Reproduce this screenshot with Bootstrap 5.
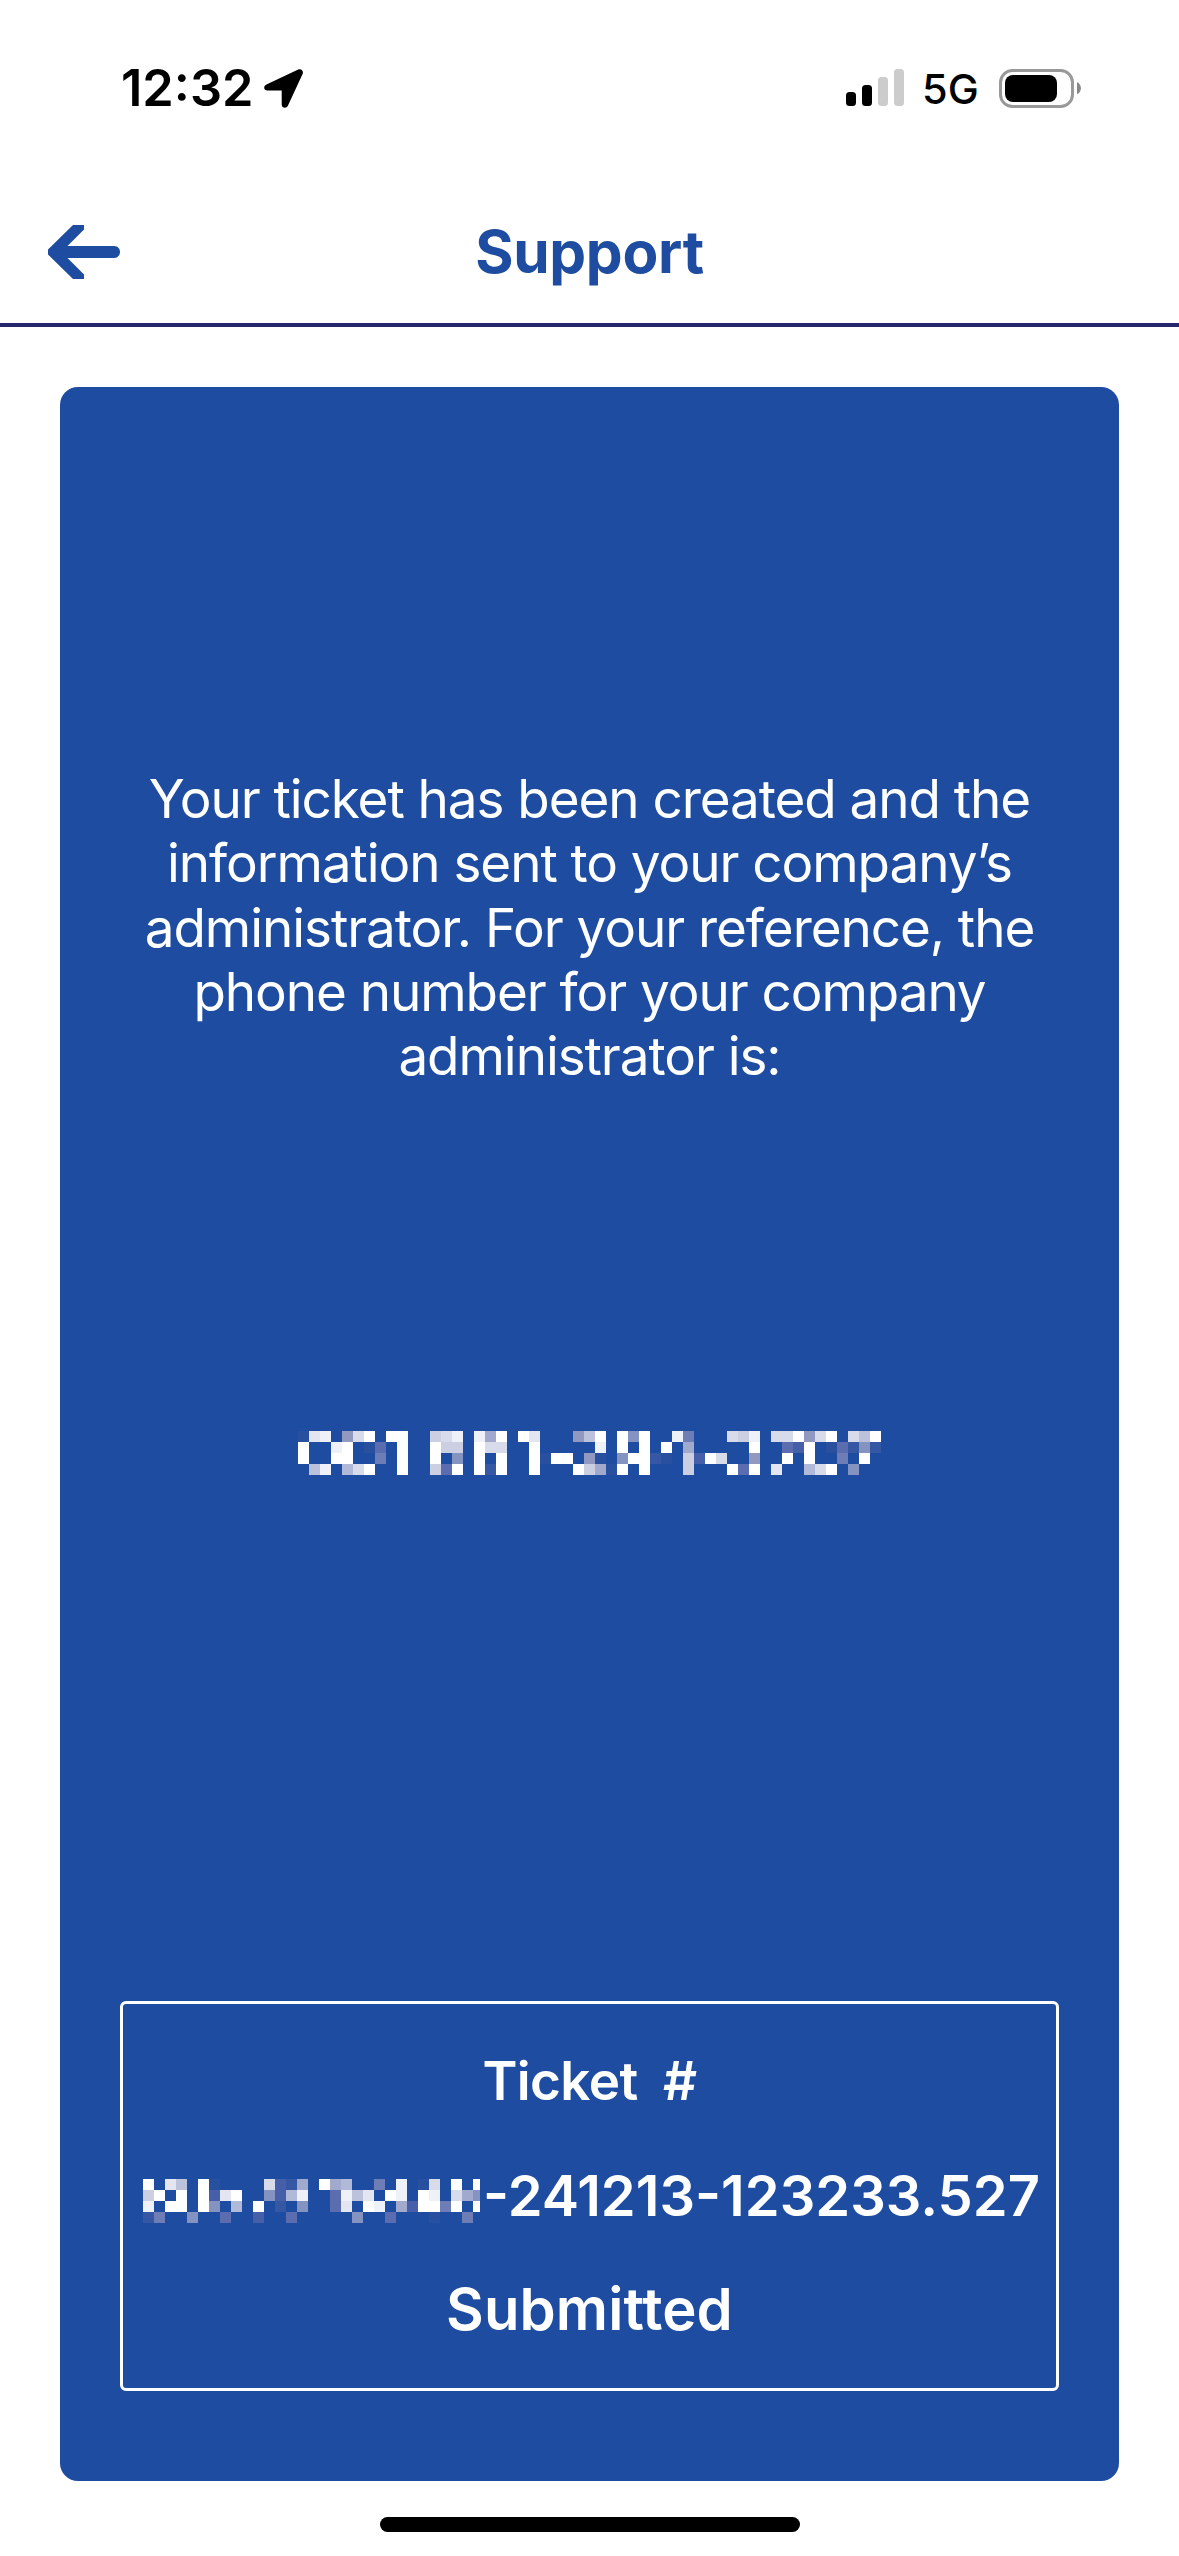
<!DOCTYPE html>
<html lang="en">
<head>
<meta charset="utf-8">
<meta name="viewport" content="width=device-width, initial-scale=1">
<title>Support</title>
<link href="https://cdn.jsdelivr.net/npm/bootstrap@5.3.0/dist/css/bootstrap.min.css" rel="stylesheet">
<style>
  :root { --brand: #1e4ca0; --rule: #26266e; }
  body { font-family: Inter, "Liberation Sans", sans-serif; background: #fff; color: #000; }
  .screen { height: 2556px; overflow: hidden; }
  .status-bar { height: 181px; padding: 0 98px 5px 121px; }
  .clock { font-size: 50.5px; font-weight: 600; line-height: 60px; width: 143px; }
  .carrier { font-size: 41.5px; font-weight: 500; line-height: 50px; margin: 1px 0 0 18px; width: 77px; }
  .app-header { height: 146px; border-bottom: 4px solid var(--rule); padding: 0 48px; }
  .app-header h1 { font-size: 58.5px; font-weight: 700; line-height: 70px; letter-spacing: -.3px; color: var(--brand); }
  .side { width: 72px; }
  .ticket-panel { margin: 60px 60px 0; height: 2094px; background: var(--brand); border-radius: 18px; padding: 380px 60px 90px; }
  .message { font-size: 53px; font-weight: 400; line-height: 64.25px; letter-spacing: -1.06px; margin-bottom: 343px; white-space: nowrap; }
  .ticket-box { height: 390px; border: 3px solid #fff; border-radius: 6px; }
  .ticket-row { height: 114.5px; font-weight: 600; }
  .row-label { font-size: 53px; letter-spacing: -.6px; white-space: pre; }
  .row-id { font-size: 56px; padding-left: 20px; white-space: nowrap; }
  .row-id svg { margin-top: 10px; }
  .ticket-id { margin-left: 3px; }
  .row-state { font-size: 58px; letter-spacing: .1px; padding-bottom: 2px; }
  .home-bar { width: 420px; height: 15px; border-radius: 8px; margin-top: 36px; background: #000; }
</style>
</head>
<body>
<div class="screen d-flex flex-column">
  <div class="status-bar d-flex align-items-center flex-shrink-0">
    <span class="clock">12:32</span>
    <svg width="39" height="39" viewBox="0 0 39 39"><path d="M3 15.2 34.2.6C37-.7 39.8 1.700 38.700 4.700L24 36.600C22.500 40 17.700 39.300 17.700 35.500V21.500H3.500C-.5 21.500-1.200 17 3 15.200Z"/></svg>
    <svg class="ms-auto" width="58" height="38" viewBox="0 0 58 38"><rect y="23" width="10" height="14" rx="3.500"/><rect x="16" y="16" width="10" height="21" rx="3.500"/><rect x="32" y="8" width="10" height="29" rx="3.500" fill="#ccc"/><rect x="48" width="10" height="37" rx="3.500" fill="#ccc"/></svg>
    <span class="carrier">5G</span>
    <svg width="82" height="39" viewBox="0 0 82 39"><rect x="1.500" y="1.500" width="72" height="36" rx="12" fill="none" stroke="#999" stroke-width="3"/><rect x="6" y="6" width="52" height="27" rx="8"/><path d="M78 13c5.200 2.600 5.200 9.700 0 12.300Z" fill="#888"/></svg>
  </div>

  <header class="app-header d-flex align-items-center justify-content-between flex-shrink-0">
    <div class="side d-flex"><svg width="72" height="54" viewBox="0 0 72 54"><path d="M25 0H36V4.500L19.500 21H66C74 21 74 33 66 33H19.500L36 49.500V54H25L0 29.500V24.500Z" fill="#1e4ca0"/></svg></div>
    <h1 class="m-0">Support</h1>
    <div class="side"></div>
  </header>

  <main class="ticket-panel d-flex flex-column text-white text-center flex-shrink-0">
    <p class="message">Your ticket has been created and the<br>information sent to your company’s<br>administrator. For your reference, the<br>phone number for your company<br>administrator is:</p>
    <svg id="phone" class="align-self-center" width="583" height="44" viewBox="0 0 583 44" shape-rendering="crispEdges"></svg>
    <section class="ticket-box d-flex flex-column justify-content-center mt-auto">
      <div class="ticket-row row-label d-flex align-items-center justify-content-center">Ticket  #</div>
      <div class="ticket-row row-id d-flex align-items-center"><svg id="account" width="337" height="44" viewBox="0 0 337 44" shape-rendering="crispEdges"></svg><span class="ticket-id">-241213-123233.527</span></div>
      <div class="ticket-row row-state d-flex align-items-center justify-content-center">Submitted</div>
    </section>
  </main>
  <div class="home-bar mx-auto flex-shrink-0"></div>
</div>
<script src="https://cdn.jsdelivr.net/npm/bootstrap@5.3.0/dist/js/bootstrap.bundle.min.js"></script>
<script>
  // Masked values: each hex digit is the shade of one 11px block.
  const shades = ['', '#28509f', '#3657a3', '#475fa8', '#5b6dae', '#6e7db5', '#8493c0', '#9299c1',
    '#a1aacd', '#b0bad8', '#bcc2dc', '#cbcfe1', '#d8dbe9', '#e3e6f1', '#eef1f8', '#ffffff'];
  function mosaic(id, rows) {
    const svg = document.getElementById(id);
    rows.forEach((line, r) => [...line].forEach((d, c) => {
      const shade = shades[parseInt(d, 16)];
      if (!shade) return;
      const block = document.createElementNS('http://www.w3.org/2000/svg', 'rect');
      for (const [k, v] of Object.entries({ x: c * 11, y: r * 11, width: 11, height: 11, fill: shade })) block.setAttribute(k, v);
      svg.append(block);
    }));
  }
  mosaic('phone', [
    '1de07cf0ff00bce0e8f0fd0007af0f6f00e5000cbe0ccf7cf0caf',
    'f00ef0140f00fbb0fcc00f00000e0f0f0f0800000f0043f014262',
    'f00ff0050f00f060f0f00f1ff07106ff210b3fc00700f0f0050f0',
    '0ae09cf00f00b4f0f2f00f000fb81f0f000b000f4f0d009cf0600'
  ]);
  mosaic('account', [
    'f0da0f10000c3280f890050e01c0f0f',
    'bf0f0f3df00639e004ead0fe0fe0c86',
    'e0ff0f6090f0206004d0fe083ff5f0f',
    '2500600400300400000600400010050'
  ]);
</script>
</body>
</html>
